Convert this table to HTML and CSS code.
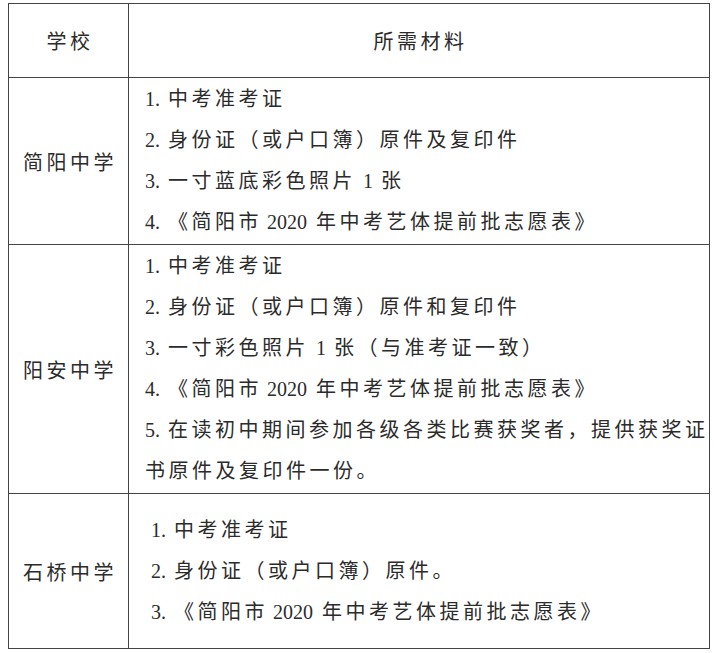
FILE: index.html
```html
<!DOCTYPE html>
<html lang="zh-CN">
<head>
<meta charset="utf-8">
<title>所需材料</title>
<link rel="stylesheet" href="styles.css">
</head>
<body>
<table class="tbl">
  <colgroup><col class="c1"><col class="c2"></colgroup>
  <tr class="r-head">
    <td class="school">学校</td>
    <td class="head">所需材料</td>
  </tr>
  <tr class="r1">
    <td class="school">简阳中学</td>
    <td class="items">
      <div class="line"><span class="no">1.</span>中考准考证</div>
      <div class="line"><span class="no">2.</span>身份证（或户口簿）原件及复印件</div>
      <div class="line"><span class="no">3.</span>一寸蓝底彩色照片<span class="num">1</span>张</div>
      <div class="line"><span class="no">4.</span>《简阳市<span class="yr">2020</span>年中考艺体提前批志愿表》</div>
    </td>
  </tr>
  <tr class="r2">
    <td class="school">阳安中学</td>
    <td class="items">
      <div class="line"><span class="no">1.</span>中考准考证</div>
      <div class="line"><span class="no">2.</span>身份证（或户口簿）原件和复印件</div>
      <div class="line"><span class="no">3.</span>一寸彩色照片<span class="num">1</span>张（与准考证一致）</div>
      <div class="line"><span class="no">4.</span>《简阳市<span class="yr">2020</span>年中考艺体提前批志愿表》</div>
      <div class="line"><span class="no">5.</span>在读初中期间参加各级各类比赛获奖者，提供获奖证</div>
      <div class="line">书原件及复印件一份。</div>
    </td>
  </tr>
  <tr class="r3">
    <td class="school">石桥中学</td>
    <td class="items indent">
      <div class="line"><span class="no">1.</span>中考准考证</div>
      <div class="line"><span class="no">2.</span>身份证（或户口簿）原件。</div>
      <div class="line"><span class="no">3.</span>《简阳市<span class="yr">2020</span>年中考艺体提前批志愿表》</div>
    </td>
  </tr>
</table>
</body>
</html>
```

FILE: styles.css
```css
html, body {
  margin: 0;
  padding: 0;
  background: #ffffff;
}
body {
  padding: 3px 0 0 8px;
  font-family: "Liberation Serif", "Noto Sans CJK SC", serif;
  color: #2b2b2b;
}
.tbl {
  border-collapse: collapse;
  table-layout: fixed;
  width: 702px;
  font-size: 20px;
  letter-spacing: 3.5px;
}
.c1 { width: 120px; }
.tbl td {
  border: 1px solid #444;
  padding: 0;
  vertical-align: middle;
}
.r-head { height: 74px; }
.r1 { height: 167px; }
.r2 { height: 249px; }
.r3 { height: 155px; }
.school, .head {
  text-align: center;
  padding-left: 3px !important;
}
.items {
  padding-left: 16px !important;
}
.items.indent {
  padding-left: 22px !important;
}
.line {
  line-height: 41px;
  white-space: nowrap;
}
.no {
  letter-spacing: 0;
  margin-right: 8px;
}
.num {
  letter-spacing: 0;
  margin: 0 8px 0 7px;
}
.yr {
  letter-spacing: 0;
  margin: 0 9px 0 5px;
}
```
